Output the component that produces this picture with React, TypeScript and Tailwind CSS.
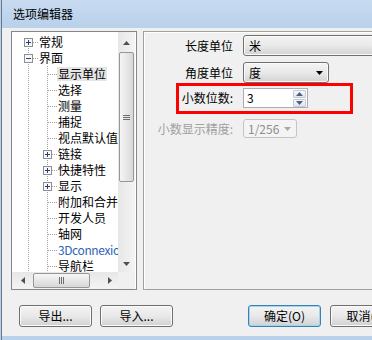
type Row = {
  label: string;
  level: 0 | 1;
  box?: "+" | "-";
  first?: boolean;
  selected?: boolean;
  blue?: boolean;
};

const rows: Row[] = [
  { label: "常规", level: 0, box: "+", first: true },
  { label: "界面", level: 0, box: "-" },
  { label: "显示单位", level: 1, selected: true },
  { label: "选择", level: 1 },
  { label: "测量", level: 1 },
  { label: "捕捉", level: 1 },
  { label: "视点默认值", level: 1 },
  { label: "链接", level: 1, box: "+" },
  { label: "快捷特性", level: 1, box: "+" },
  { label: "显示", level: 1, box: "+" },
  { label: "附加和合并", level: 1 },
  { label: "开发人员", level: 1 },
  { label: "轴网", level: 1 },
  { label: "3Dconnexion", level: 1, blue: true },
  { label: "导航栏", level: 1 },
];

// one indent column of the tree: dotted lines plus the optional +/- box
function Cell({ node, box, first }: { node: boolean; box?: "+" | "-"; first?: boolean }) {
  return (
    <svg width="19" height="16" className="shrink-0">
      <line x1="9.5" x2="9.5" y1={first ? 8 : 0} y2="16" stroke="#a0a0a0" strokeDasharray="1 1" />
      {node && <line x1="10" x2="19" y1="8.5" y2="8.5" stroke="#a0a0a0" strokeDasharray="1 1" />}
      {box && (
        <>
          <rect x="5.5" y="4.5" width="8" height="8" fill="#f7f7f7" stroke="#8e8f8f" />
          <line x1="7" x2="12" y1="8.5" y2="8.5" stroke="#22407c" />
          {box === "+" && <line x1="9.5" x2="9.5" y1="6" y2="11" stroke="#22407c" />}
        </>
      )}
    </svg>
  );
}

function Arrow({ dir, color = "#505050" }: { dir: "up" | "down" | "left" | "right"; color?: string }) {
  const pts = {
    up: "0,4 7,4 3.5,0",
    down: "0,0 7,0 3.5,4",
    left: "4,0 4,7 0,3.5",
    right: "0,0 0,7 4,3.5",
  }[dir];
  const vertical = dir === "up" || dir === "down";
  return (
    <svg width={vertical ? 7 : 4} height={vertical ? 4 : 7}>
      <polygon points={pts} fill={color} />
    </svg>
  );
}

function Tree() {
  return (
    <div className="flex h-[259px] w-[126px] shrink-0 flex-col border border-[#828790] bg-white">
      <div className="flex min-h-0 flex-1">
        <div className="flex w-[106px] flex-col overflow-hidden whitespace-nowrap pl-[7px] pt-[2px]">
          {rows.map((r) => (
            <div key={r.label} className="flex h-[16px] shrink-0 items-center">
              {r.level === 0 ? (
                <Cell node box={r.box} first={r.first} />
              ) : (
                <>
                  <Cell node={false} />
                  <Cell node box={r.box} />
                </>
              )}
              <span
                className={
                  "px-[1px] leading-[14px] " +
                  (r.selected ? "bg-[#e5e5e5] " : "") +
                  (r.blue ? "tracking-[-0.4px] text-[#2f63b8]" : "")
                }
              >
                {r.label}
              </span>
            </div>
          ))}
        </div>
        <div className="flex w-[17px] shrink-0 flex-col bg-linear-to-r from-[#e7e7e7] to-[#f4f4f4]">
          <div className="flex h-[18px] shrink-0 items-end justify-center pb-[5px]">
            <Arrow dir="up" />
          </div>
          <div className="mx-auto mt-[2px] flex h-[130px] w-[15px] shrink-0 flex-col items-center justify-center gap-[1px] rounded-[2px] border border-[#979797] bg-linear-to-r from-[#f6f6f6] to-[#d8d8d8]">
            <div className="h-px w-[7px] bg-[#6e6e6e]" />
            <div className="h-px w-[7px] bg-[#6e6e6e]" />
            <div className="h-px w-[7px] bg-[#6e6e6e]" />
          </div>
          <div className="flex-1" />
          <div className="flex h-[17px] shrink-0 items-center justify-center">
            <Arrow dir="down" />
          </div>
        </div>
      </div>
      <div className="flex h-[17px] shrink-0">
        <div className="flex w-[106px] items-center bg-linear-to-b from-[#e7e7e7] to-[#f4f4f4]">
          <div className="flex w-[17px] shrink-0 justify-center pl-[4px]">
            <Arrow dir="left" />
          </div>
          <div className="ml-[4px] flex h-[15px] w-[57px] shrink-0 items-center justify-center gap-[1px] rounded-[2px] border border-[#979797] bg-linear-to-b from-[#f6f6f6] to-[#d8d8d8]">
            <div className="h-[7px] w-px bg-[#6e6e6e]" />
            <div className="h-[7px] w-px bg-[#6e6e6e]" />
            <div className="h-[7px] w-px bg-[#6e6e6e]" />
          </div>
          <div className="flex-1" />
          <div className="flex w-[17px] shrink-0 justify-center">
            <Arrow dir="right" />
          </div>
        </div>
        <div className="w-[17px] bg-[#f0f0f0]" />
      </div>
    </div>
  );
}

function Combo({ text, w, arrow = true }: { text: string; w: string; arrow?: boolean }) {
  return (
    <div
      className={
        "flex h-[21px] shrink-0 items-center justify-between rounded-[3px] border border-[#707070] bg-linear-to-b from-[#f4f4f4] via-[#e9e9e9] to-[#d3d3d3] pl-[5px] pr-[5px] shadow-[inset_0_0_0_1px_#fafafa] " +
        w
      }
    >
      <span>{text}</span>
      {arrow && <Arrow dir="down" color="#000" />}
    </div>
  );
}

function Panel() {
  return (
    <div className="relative h-[259px] w-[240px] shrink-0 border border-[#a0a0a0] shadow-[inset_1px_1px_0_#ffffff]">
      <div className="flex flex-col pt-[3px]">
        <div className="flex items-center gap-[10px]">
          <div className="w-[89px] shrink-0 text-right">长度单位</div>
          <Combo text="米" w="w-[140px]" arrow={false} />
        </div>
        <div className="mt-[6px] flex items-center gap-[10px]">
          <div className="w-[89px] shrink-0 text-right">角度单位</div>
          <Combo text="度" w="w-[86px]" />
        </div>
        <div className="mt-[5px] flex items-center gap-[10px]">
          <div className="w-[89px] shrink-0 text-right">小数位数:</div>
          <div className="flex h-[20px] w-[65px] shrink-0 items-center border border-[#abadb3] bg-white">
            <span className="flex-1 pl-[3px]">3</span>
            <div className="mr-[1px] flex h-[17px] w-[13px] flex-col gap-[1px]">
              <div className="flex flex-1 items-center justify-center rounded-[1px] border border-[#c4cbd6] bg-linear-to-b from-[#f7f8fa] to-[#e2e6ec]">
                <Arrow dir="up" color="#4a6088" />
              </div>
              <div className="flex flex-1 items-center justify-center rounded-[1px] border border-[#c4cbd6] bg-linear-to-b from-[#f7f8fa] to-[#e2e6ec]">
                <Arrow dir="down" color="#4a6088" />
              </div>
            </div>
          </div>
        </div>
        <div className="mt-[11px] flex items-center gap-[10px] text-[#a0a0a0]">
          <div className="w-[89px] shrink-0 text-right">小数显示精度:</div>
          <div className="flex h-[19px] w-[54px] shrink-0 items-center justify-between rounded-[3px] border border-[#c2c5c8] bg-[#f4f4f4] pl-[4px] pr-[5px]">
            <span className="text-[#8d8d8d]">1/256</span>
            <Arrow dir="down" color="#a8a8a8" />
          </div>
        </div>
      </div>
      <div className="pointer-events-none absolute left-[32px] top-[51px] h-[31px] w-[177px] border-[3px] border-[#ff0000]" />
    </div>
  );
}

function Btn({ label, def }: { label: string; def?: boolean }) {
  return (
    <button
      className={
        "h-[22px] w-[73px] shrink-0 rounded-[3px] border bg-linear-to-b from-[#f3f3f3] via-[#e9e9e9] to-[#d1d1d1] text-[12px] leading-[16px] " +
        (def
          ? "border-[#3c7fb1] shadow-[inset_0_0_0_1px_#9fd6f4]"
          : "border-[#707070] shadow-[inset_0_0_0_1px_#fbfbfb]")
      }
    >
      {label}
    </button>
  );
}

export default function App() {
  return (
    <div className="h-[340px] w-[372px] overflow-hidden bg-[#b9d1ea] pl-[1px] font-['Noto_Sans_CJK_SC',sans-serif] text-[12px] leading-[16px] text-black">
      <div className="flex h-full flex-col border-l border-[#6b7586]">
        <div className="flex h-[28px] shrink-0 items-center bg-linear-to-b from-[#c8daf0] to-[#b9d1ea] pl-[11px]">
          选项编辑器
        </div>
        <div className="flex min-h-0 flex-1 flex-col overflow-hidden bg-[#f0f0f0] pt-[3px]">
          <div className="flex gap-[6px] pl-[9px]">
            <Tree />
            <Panel />
          </div>
          <div className="mt-[15px] flex pl-[17px]">
            <Btn label="导出..." />
            <div className="ml-[8px]">
              <Btn label="导入..." />
            </div>
            <div className="ml-[75px]">
              <Btn label="确定(O)" def />
            </div>
            <div className="ml-[9px]">
              <Btn label="取消(C)" />
            </div>
          </div>
        </div>
        <div className="h-[4px] shrink-0 bg-[#b9d1ea]" />
      </div>
    </div>
  );
}
